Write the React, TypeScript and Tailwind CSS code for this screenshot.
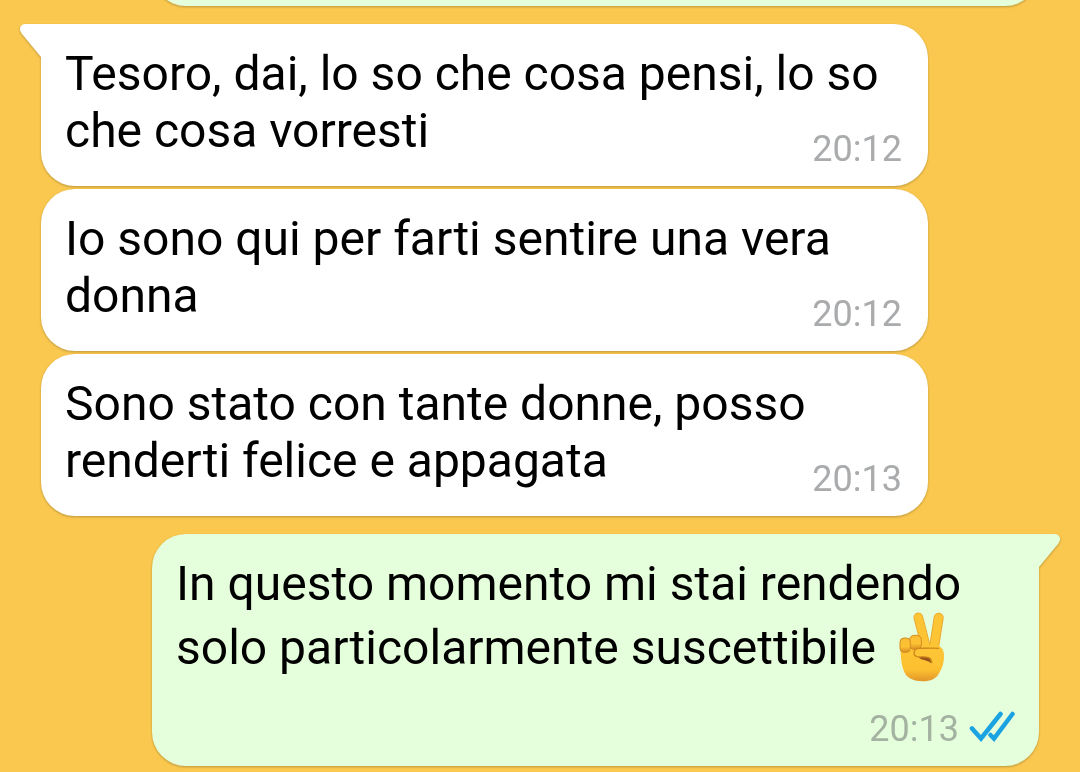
import type { ReactNode } from 'react';
import clsx from 'clsx';

type Message = {
  id: number;
  body: ReactNode;
  time: string;
  sent?: boolean;
  tail?: boolean;
};

const VictoryHand = () => (
  <svg
    viewBox="12 12 144 210"
    className="ml-2.5 inline-block h-[70px] w-12 align-[-18px]"
    role="img"
    aria-label="✌"
  >
    <defs>
      <linearGradient id="palm" x1="0" y1="0" x2="0" y2="1">
        <stop offset="0" stopColor="#fdc534" />
        <stop offset="0.7" stopColor="#fcbf30" />
        <stop offset="1" stopColor="#e2962a" />
      </linearGradient>
      <linearGradient id="knuckle" x1="0" y1="0" x2="0" y2="1">
        <stop offset="0" stopColor="#f9bd31" />
        <stop offset="0.6" stopColor="#fcc234" />
        <stop offset="1" stopColor="#d98d22" />
      </linearGradient>
    </defs>
    {/* Raised fingers */}
    <g fill="none" strokeLinecap="round">
      <path d="M134 29 L119 125" stroke="#e9a32c" strokeWidth="30" />
      <path d="M134 29 L119 125" stroke="#fdc435" strokeWidth="25" />
      <path d="M73 28 L98 125" stroke="#e9a32c" strokeWidth="29" />
      <path d="M73 28 L98 125" stroke="#fdc435" strokeWidth="24" />
    </g>
    {/* Palm */}
    <path
      d="M20 112 C19 145 22 170 30 190 C37 210 58 220 86 220 C110 220 126 212 134 198 C146 178 151 160 150 140 C149 126 144 118 134 114 L84 106 Z"
      fill="url(#palm)"
    />
    {/* Folded fingers */}
    <rect x="47" y="82" width="35" height="42" rx="13" fill="url(#knuckle)" stroke="#d48c24" strokeWidth="3" />
    <rect x="18" y="90" width="31" height="43" rx="12" fill="url(#knuckle)" stroke="#d48c24" strokeWidth="3" />
    {/* Thumb and the shade under it */}
    <path d="M72 145 C82 160 92 152 112 166 C110 150 104 146 96 142 Z" fill="#96561a" />
    <path
      d="M148 134 C140 118 128 121 110 121 L74 121 C57 122 56 143 70 146 C84 148 100 144 108 151 C113 156 113 162 112 170 L136 176 Z"
      fill="#fdc435"
    />
    <path
      d="M134 121 C110 120 90 121 74 121 C57 122 56 143 70 146 C84 148 100 144 108 151 C112 155 113 159 113 164"
      fill="none"
      stroke="#d0861f"
      strokeWidth="4"
      strokeLinecap="round"
    />
  </svg>
);

const ReadTicks = () => (
  <svg
    viewBox="0 0 46 34"
    className="h-[34px] w-[46px]"
    fill="none"
    stroke="#1ba3e1"
    strokeWidth="4.5"
    strokeLinecap="round"
    role="img"
    aria-label="Letto"
  >
    <path d="M3 19.5 L12 29.5 L31.5 5" />
    <path d="M21.5 26 L25 29.5 L43.5 5" />
  </svg>
);

const Tail = ({ sent }: { sent?: boolean }) => (
  <svg
    viewBox="0 0 22 34"
    className={clsx(
      'absolute top-0 h-[34px] w-[22px]',
      sent ? '-right-[21px] -scale-x-100 fill-[#e5ffdc]' : '-left-[21px] fill-white'
    )}
    aria-hidden="true"
  >
    <path d="M22 0 H6 C0 0 -2 5 2 10 L21 33 H22 Z" />
  </svg>
);

const Bubble = ({ body, time, sent, tail }: Omit<Message, 'id'>) => (
  <div
    className={clsx(
      'relative flow-root rounded-[34px] px-6 pt-[21px] pb-[17px] text-[48px] leading-[57px] text-black drop-shadow-[0_1px_1px_rgba(0,0,0,0.25)]',
      sent ? 'mr-[41px] ml-[152px] bg-[#e5ffdc]' : 'mr-[152px] ml-[41px] bg-white',
      tail && (sent ? 'rounded-tr-none' : 'rounded-tl-none')
    )}
  >
    {tail && <Tail sent={sent} />}
    <span>{body}</span>
    {/* Sits beside the last line when there is room, otherwise drops below it */}
    <span
      className={clsx(
        'float-right mt-[27px] flex items-start gap-2.5 pl-4 text-[36px] leading-10',
        sent ? 'text-[#a4b3a1]' : 'pr-0.5 text-[#a9abad]'
      )}
    >
      <time>{time}</time>
      {sent && <ReadTicks />}
    </span>
  </div>
);

const messages: Message[] = [
  { id: 1, body: 'Tesoro, dai, lo so che cosa pensi, lo so che cosa vorresti', time: '20:12', tail: true },
  { id: 2, body: 'Io sono qui per farti sentire una vera donna', time: '20:12' },
  { id: 3, body: 'Sono stato con tante donne, posso renderti felice e appagata', time: '20:13' },
  {
    id: 4,
    body: (
      <>
        In questo momento mi stai rendendo solo particolarmente suscettibile <VictoryHand />
      </>
    ),
    time: '20:13',
    sent: true,
    tail: true,
  },
];

const Chat = () => {
  return (
    <main className="min-h-screen overflow-hidden bg-[#fac84f] pb-1.5 font-[Roboto,sans-serif]">
      {/* End of the previous message, scrolled out of view */}
      <div className="-mt-[74px] mr-[41px] ml-[152px] h-20 rounded-[34px] bg-[#e5ffdc] drop-shadow-[0_1px_1px_rgba(0,0,0,0.25)]" />

      <div className="mt-[18px] flex flex-col gap-[18px]">
        <div className="flex flex-col gap-[3px]">
          {messages
            .filter((m) => !m.sent)
            .map(({ id, ...m }) => (
              <Bubble key={id} {...m} />
            ))}
        </div>
        <div className="flex flex-col gap-[3px]">
          {messages
            .filter((m) => m.sent)
            .map(({ id, ...m }) => (
              <Bubble key={id} {...m} />
            ))}
        </div>
      </div>
    </main>
  );
};

export default Chat;
